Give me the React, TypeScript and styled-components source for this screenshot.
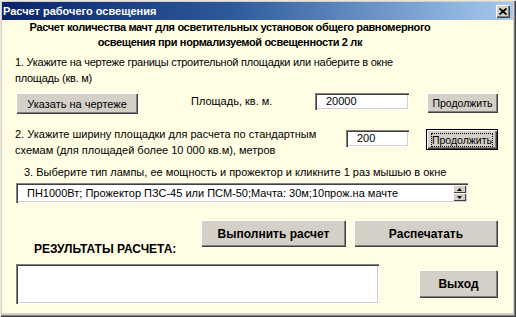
import styled, { createGlobalStyle } from "styled-components";

const GlobalStyle = createGlobalStyle`
	html, body {
		margin: 0;
		padding: 0;
		background: #ffffff;
	}
	body {
		font-family: "Liberation Sans", Arial, sans-serif;
	}
`;

const Window = styled.div`
	width: 516px;
	height: 317px;
	box-sizing: border-box;
	padding: 2px 3px 4px 2px;
	background: #d4d0c8;
	box-shadow: inset 1px 1px #e8e6e0, inset -1px -1px #404040, inset -2px -2px #808080;
	display: flex;
	flex-direction: column;
`;

const TitleBar = styled.div`
	height: 18px;
	display: flex;
	align-items: center;
	justify-content: space-between;
	padding: 0 3px 0 1px;
	background: linear-gradient(to right, #0a246a 0%, #2d5a9c 45%, #a6caf0 100%);
`;

const Title = styled.span`
	color: #ffffff;
	font-family: "Liberation Sans", Arial, sans-serif;
	font-weight: bold;
	font-size: 11px;
`;

const CloseButton = styled.div`
	width: 14px;
	height: 13px;
	box-sizing: border-box;
	background: #d4d0c8;
	box-shadow: inset 1px 1px #ffffff, inset -1px -1px #404040, inset -2px -2px #808080;
	display: flex;
	align-items: center;
	justify-content: center;
`;

const Body = styled.div`
	flex: 1;
	background: #fffee4;
	display: flex;
	flex-direction: column;
	padding: 0 15px 0 14px;
	color: #000;
	font-size: 11px;
`;

const Heading = styled.div`
	width: 428px;
	text-align: center;
	font-weight: bold;
	font-size: 11px;
	letter-spacing: -0.35px;
	line-height: 15px;
`;

const Step = styled.div<{ $indent?: number; $mt: number; $ls?: number }>`
	margin-top: ${(p) => p.$mt}px;
	padding-left: ${(p) => p.$indent ?? 0}px;
	font-size: 11px;
	letter-spacing: ${(p) => p.$ls ?? 0}px;
	line-height: 16px;
	margin-left: -1px;
`;

const Row = styled.div<{ $mt: number }>`
	display: flex;
	align-items: flex-start;
	margin-top: ${(p) => p.$mt}px;
`;

const Button = styled.div<{ $w: number; $h: number; $bold?: boolean; $size?: number; $focused?: boolean; $mt?: number; $ml?: number }>`
	width: ${(p) => p.$w}px;
	height: ${(p) => p.$h}px;
	margin-top: ${(p) => p.$mt ?? 0}px;
	margin-left: ${(p) => p.$ml ?? 0}px;
	box-sizing: border-box;
	background: #d4d0c8;
	display: flex;
	align-items: center;
	justify-content: center;
	font-size: ${(p) => p.$size ?? 11}px;
	font-weight: ${(p) => (p.$bold ? "bold" : "normal")};
	box-shadow: ${(p) =>
		p.$focused
			? "inset 0 0 0 1px #000, inset 2px 2px #ffffff, inset -2px -2px #404040, inset -3px -3px #808080"
			: "inset 1px 1px #ffffff, inset -1px -1px #404040, inset -2px -2px #808080"};
	flex-shrink: 0;
`;

const FocusRing = styled.span`
	padding: 1px 1px;
	outline: 1px dotted #000;
	outline-offset: -1px;
`;

const Label = styled.div<{ $w: number; $ml: number }>`
	width: ${(p) => p.$w}px;
	margin-left: ${(p) => p.$ml}px;
	margin-top: 1px;
	line-height: 15px;
	font-size: 11px;
`;

const Input = styled.div<{ $w: number; $mt?: number }>`
	width: ${(p) => p.$w}px;
	height: 17px;
	margin-top: ${(p) => p.$mt ?? 0}px;
	box-sizing: border-box;
	background: #ffffff;
	padding-left: 11px;
	font-size: 11px;
	line-height: 17px;
	box-shadow: inset 1px 1px #808080, inset 2px 2px #404040, inset -1px -1px #ffffff, inset -2px -2px #d4d0c8;
	flex-shrink: 0;
`;

const Spacer = styled.div`
	flex: 1;
`;

const ListBox = styled.div`
	margin-top: 3px;
	width: 452px;
	height: 20px;
	box-sizing: border-box;
	background: #ffffff;
	display: flex;
	align-items: stretch;
	box-shadow: inset 1px 1px #808080, inset 2px 2px #404040, inset -1px -1px #ffffff, inset -2px -2px #d4d0c8;
	padding: 2px;
`;

const ListText = styled.div`
	flex: 1;
	font-size: 11px;
	line-height: 16px;
	padding-left: 9px;
	white-space: nowrap;
`;

const Spinner = styled.div`
	width: 13px;
	display: flex;
	flex-direction: column;
`;

const SpinBtn = styled.div`
	flex: 1;
	background: #d4d0c8;
	box-shadow: inset 1px 1px #ffffff, inset -1px -1px #404040;
	display: flex;
	align-items: center;
	justify-content: center;
`;

const ActionRow = styled.div`
	margin-top: 17px;
	height: 37px;
	display: flex;
	gap: 8px;
`;

const ResultsLabel = styled.div`
	align-self: flex-end;
	margin-left: 18px;
	font-weight: bold;
	font-size: 12px;
	line-height: 16px;
	flex: 1;
`;

const BottomRow = styled.div`
	margin-top: 7px;
	display: flex;
	align-items: center;
	justify-content: space-between;
`;

const ResultsBox = styled.div`
	width: 363px;
	height: 40px;
	box-sizing: border-box;
	background: #ffffff;
	box-shadow: inset 1px 1px #808080, inset 2px 2px #404040, inset -1px -1px #ffffff, inset -2px -2px #d4d0c8;
`;

const Arrow = ({ up }: { up?: boolean }) => (
	<svg width="5" height="3" viewBox="0 0 5 3">
		<path d={up ? "M2.5 0 L5 3 L0 3 Z" : "M0 0 L5 0 L2.5 3 Z"} fill="#000" />
	</svg>
);

const App = () => {
	return (
		<>
			<GlobalStyle />
			<Window>
				<TitleBar>
					<Title>Расчет рабочего освещения</Title>
					<CloseButton>
						<svg width="8" height="7" viewBox="0 0 8 7">
							<path d="M0.5 0.5 L7.5 6.5 M7.5 0.5 L0.5 6.5" stroke="#000" strokeWidth="1.8" />
						</svg>
					</CloseButton>
				</TitleBar>
				<Body>
					<Heading>
						Расчет количества мачт для осветительных установок общего равномерного
						<br />
						освещения при нормализуемой освещенности 2 лк
					</Heading>
					<Step $mt={4} $ls={-0.25}>
						1. Укажите на чертеже границы строительной площадки или наберите в окне
						<br />
						площадь (кв. м)
					</Step>
					<Row $mt={7}>
						<Button $w={122} $h={21}>
							Указать на чертеже
						</Button>
						<Label $w={124} $ml={53}>
							Площадь, кв. м.
						</Label>
						<Input $w={94}>20000</Input>
						<Spacer />
						<Button $w={71} $h={20} $size={10.5}>
							Продолжить
						</Button>
					</Row>
					<Row $mt={12}>
						<Step $mt={0}>
							2. Укажите ширину площадки для расчета по стандартным
							<br />
							схемам (для площадей более 10 000 кв.м), метров
						</Step>
						<Spacer />
						<Input $w={63} $mt={4}>
							200
						</Input>
						<Button $w={72} $h={21} $size={10.5} $focused $mt={3} $ml={17}>
							<FocusRing>Продолжить</FocusRing>
						</Button>
					</Row>
					<Step $mt={6} $indent={9}>
						3. Выберите тип лампы, ее мощность и прожектор и кликните 1 раз мышью в окне
					</Step>
					<ListBox>
						<ListText>ПН1000Вт; Прожектор ПЗС-45 или ПСМ-50;Мачта: 30м;10прож.на мачте</ListText>
						<Spinner>
							<SpinBtn>
								<Arrow up />
							</SpinBtn>
							<SpinBtn>
								<Arrow />
							</SpinBtn>
						</Spinner>
					</ListBox>
					<ActionRow>
						<ResultsLabel>РЕЗУЛЬТАТЫ РАСЧЕТА:</ResultsLabel>
						<Button $w={145} $h={27} $bold $size={12}>
							Выполнить расчет
						</Button>
						<Button $w={144} $h={27} $bold $size={12}>
							Распечатать
						</Button>
					</ActionRow>
					<BottomRow>
						<ResultsBox />
						<Button $w={79} $h={28} $bold $size={12}>
							Выход
						</Button>
					</BottomRow>
				</Body>
			</Window>
		</>
	);
};

export default App;
